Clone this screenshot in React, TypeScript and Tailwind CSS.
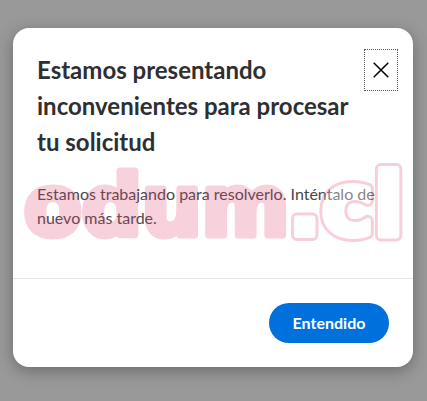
function Watermark() {
  return (
    <svg
      aria-hidden="true"
      viewBox="0 0 400 140"
      className="pointer-events-none absolute inset-x-0 top-[104px] w-full font-['DejaVu_Sans',sans-serif] font-bold"
      strokeLinejoin="round"
    >
      <g opacity="0.25" fill="#e34a72" stroke="#e34a72" strokeWidth="7">
        <text x="11" y="103" fontSize="84">odum</text>
      </g>
      <g opacity="0.35" fontSize="88">
        <text x="275" y="103" fill="#eb7995" stroke="#eb7995" strokeWidth="12">.cl</text>
        <text x="275" y="103" fill="#ffffff" stroke="#ffffff" strokeWidth="6">.cl</text>
      </g>
    </svg>
  );
}

export default function App() {
  return (
    <main className="flex min-h-screen items-start justify-center bg-[#999999] pt-7 pr-3.5 pb-8 pl-[13px] font-[Lato,sans-serif]">
      <section
        role="dialog"
        aria-labelledby="dialog-title"
        className="relative w-full max-w-[400px] rounded-2xl bg-white shadow-[0_4px_16px_rgba(0,0,0,0.3)]"
      >
        <header className="flex items-start justify-between pt-5 pr-[15px] pl-6">
          <h1 id="dialog-title" className="pt-1 text-2xl leading-9 font-bold text-[#2e2f32]">
            Estamos presentando
            <br />
            inconvenientes para procesar
            <br />
            tu solicitud
          </h1>
          <button
            type="button"
            aria-label="Cerrar"
            className="mt-px flex h-[42px] w-[34px] shrink-0 items-center justify-center border border-dotted border-[#555555]"
          >
            <svg viewBox="0 0 16 16" className="size-4" fill="none" stroke="#000000" strokeWidth="1.5">
              <path d="M0.7 0.7 15.3 15.3M15.3 0.7 0.7 15.3" />
            </svg>
          </button>
        </header>
        <p className="px-6 pt-[22px] pb-12 text-base text-[#46474a]">
          Estamos trabajando para resolverlo. Inténtalo de nuevo más tarde.
        </p>
        <footer className="flex justify-end border-t border-[#e3e4e5] p-6">
          <button type="button" className="h-10 w-[120px] rounded-full bg-[#0071dc] text-base font-bold text-white">
            Entendido
          </button>
        </footer>
        <Watermark />
      </section>
    </main>
  );
}
